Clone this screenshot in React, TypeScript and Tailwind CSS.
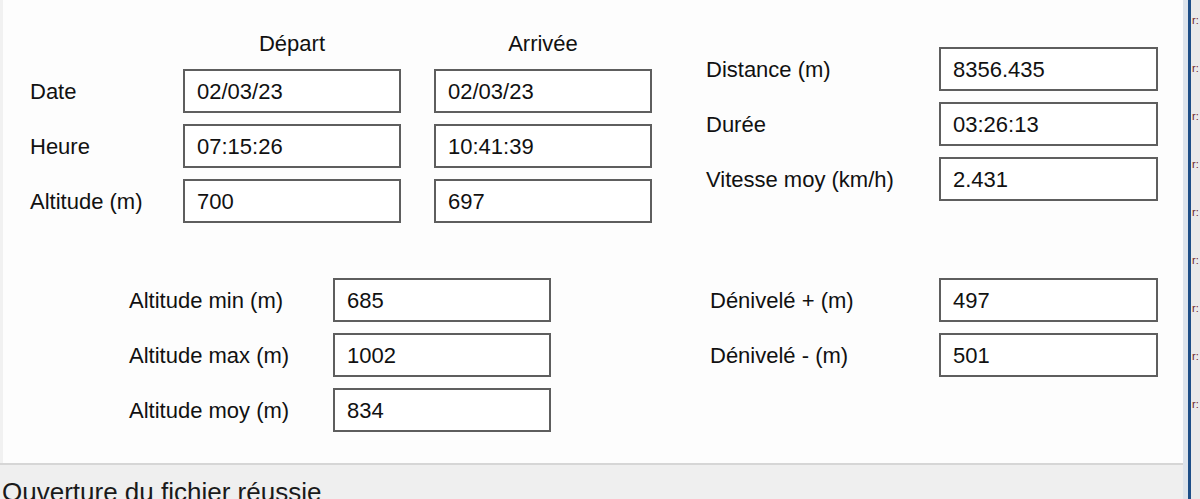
const font = { fontFamily: '"Liberation Sans", Arial, sans-serif' }

function Box({ value, w = 'w-[218px]' }: { value: string; w?: string }) {
  return (
    <div className={`${w} h-[44px] border-2 border-[#5e5e5e] bg-white flex items-center pl-[12px] text-[22px] text-[#111]`}>
      {value}
    </div>
  )
}

function Label({ text }: { text: string }) {
  return <div className="h-[44px] flex items-center text-[22px] text-[#111]">{text}</div>
}

export default function App() {
  const marks = Array.from({ length: 9 })

  return (
    <div className="w-[1200px] h-[499px] flex overflow-hidden bg-[#f0f0f0]" style={font}>
      <div className="w-[1183px] flex flex-col">
        <div className="h-[463px] shrink-0 bg-[#fdfdfd] border-l-[3px] border-[#f1f1f1] flex flex-col pt-[28px]">
          {/* top: départ / arrivée and totals */}
          <div className="flex items-start">
            <div className="ml-[27px] grid grid-cols-[120px_218px_218px] gap-x-[33px] gap-y-[11px]">
              <div />
              <div className="h-[30px] flex items-center justify-center text-[22px] text-[#111]">Départ</div>
              <div className="h-[30px] flex items-center justify-center text-[22px] text-[#111]">Arrivée</div>

              <Label text="Date" />
              <Box value="02/03/23" />
              <Box value="02/03/23" />

              <Label text="Heure" />
              <Box value="07:15:26" />
              <Box value="10:41:39" />

              <Label text="Altitude (m)" />
              <Box value="700" />
              <Box value="697" />
            </div>

            <div className="ml-[54px] mt-[19px] grid grid-cols-[233px_219px] gap-y-[11px]">
              <Label text="Distance (m)" />
              <Box value="8356.435" w="w-[219px]" />
              <Label text="Durée" />
              <Box value="03:26:13" w="w-[219px]" />
              <Label text="Vitesse moy (km/h)" />
              <Box value="2.431" w="w-[219px]" />
            </div>
          </div>

          {/* bottom: altitudes and dénivelés */}
          <div className="flex items-start mt-[55px]">
            <div className="ml-[126px] grid grid-cols-[204px_218px] gap-y-[11px]">
              <Label text="Altitude min (m)" />
              <Box value="685" />
              <Label text="Altitude max (m)" />
              <Box value="1002" />
              <Label text="Altitude moy (m)" />
              <Box value="834" />
            </div>

            <div className="ml-[159px] grid grid-cols-[229px_219px] gap-y-[11px]">
              <Label text="Dénivelé + (m)" />
              <Box value="497" w="w-[219px]" />
              <Label text="Dénivelé - (m)" />
              <Box value="501" w="w-[219px]" />
            </div>
          </div>
        </div>

        <div className="h-[2px] shrink-0 bg-[#d6d6d6]" />
        <div className="flex-1 min-h-0 overflow-hidden bg-[#efefef] pl-[2px] pt-[14px] text-[26px] leading-none text-[#1a1a1a] whitespace-nowrap">
          Ouverture du fichier réussie
        </div>
      </div>

      <div className="w-[5px] bg-[#dde4ec]" />
      <div className="w-[3px] bg-[#1d4e87]" />
      <div className="flex-1 bg-[#e9e9e9] flex flex-col gap-[36px] pt-[14px] overflow-hidden">
        {marks.map((_, i) => (
          <div key={i} className="h-[12px] text-[11px] leading-[12px] text-[#6b1f1f] pl-[1px]">r:</div>
        ))}
      </div>
    </div>
  )
}
